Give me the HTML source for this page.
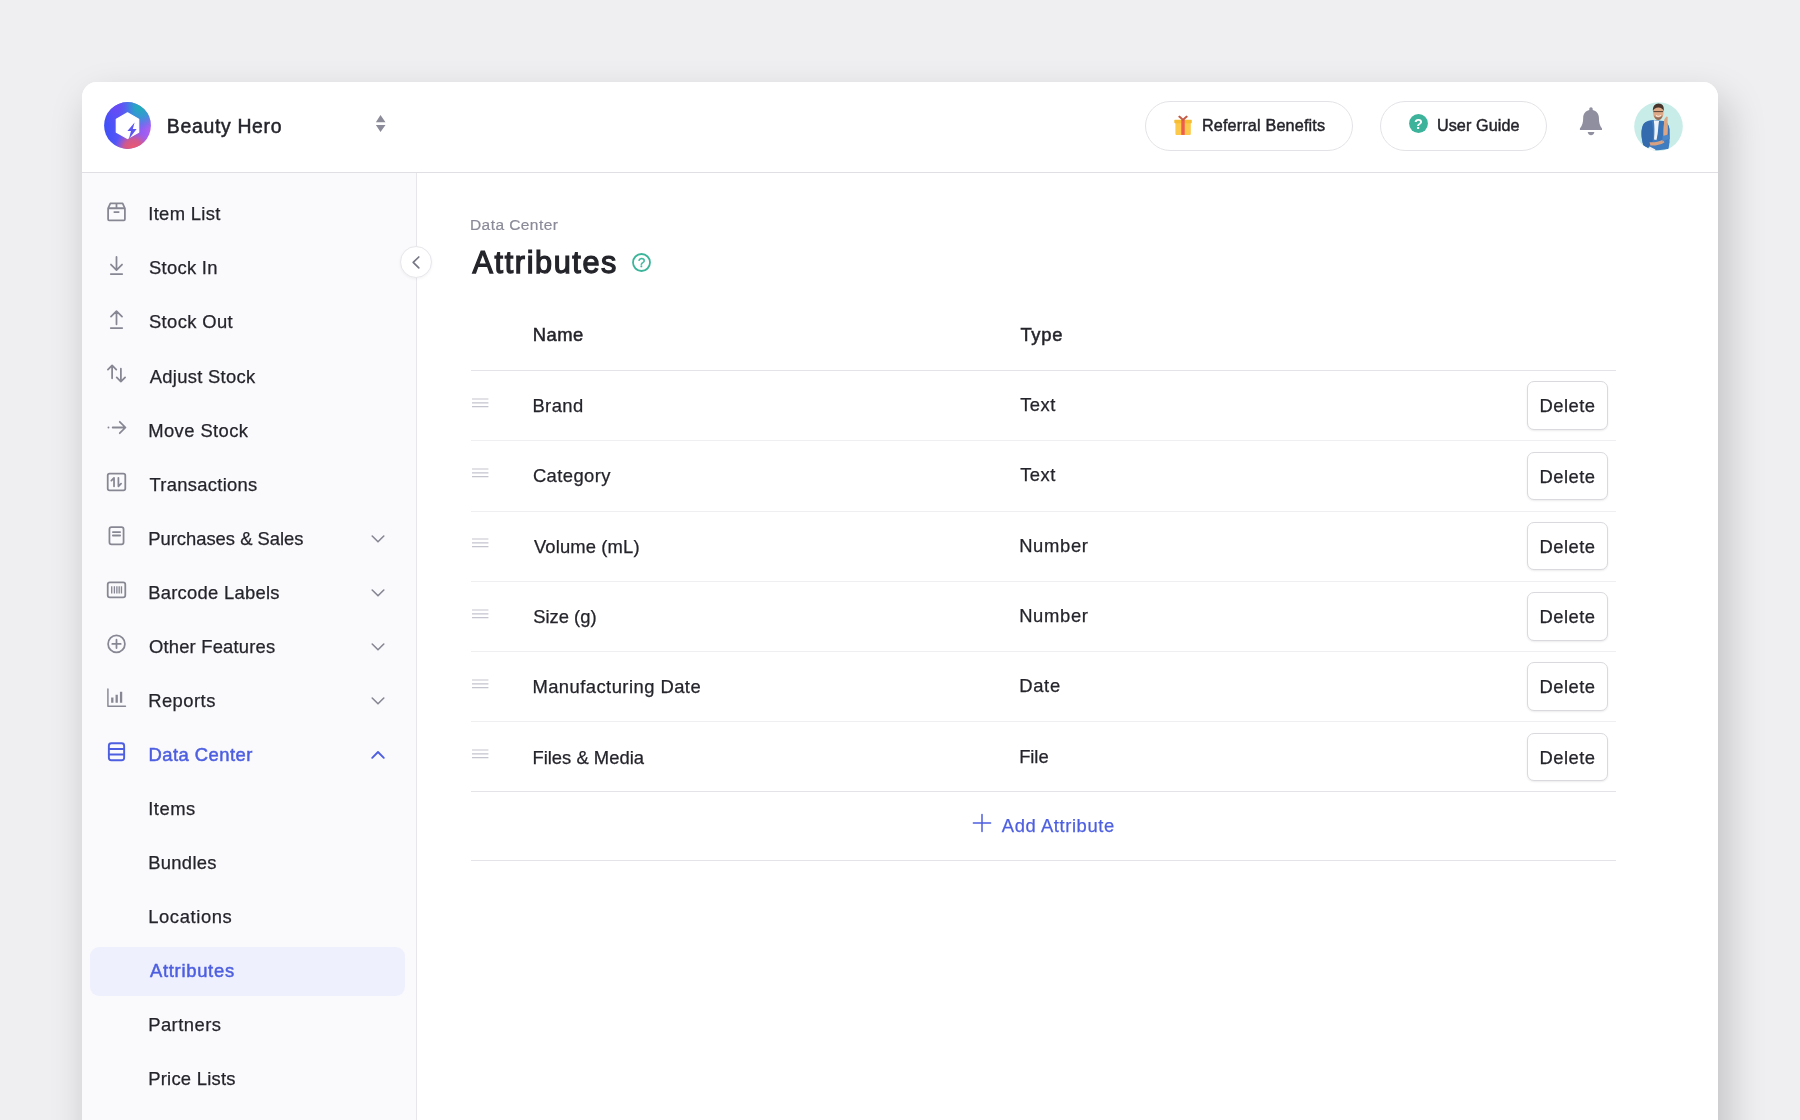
<!DOCTYPE html>
<html lang="en">
<head>
<meta charset="utf-8">
<title>Attributes - Data Center</title>
<style>
*{box-sizing:border-box;margin:0;padding:0}
html,body{width:1800px;height:1120px;overflow:hidden}
body{background:#efeff1;font-family:"Liberation Sans",Arial,sans-serif;color:#24242b;position:relative}
.card{position:absolute;left:82px;top:82px;width:1636px;height:1100px;background:#fff;border-radius:15px 15px 0 0;box-shadow:8px 18px 39px rgba(10,10,20,.21);overflow:hidden}
.hdrbg{position:absolute;left:0;top:0;width:1636px;height:91px;border-bottom:1.4px solid #e0e0e4;background:#fff}
.hdr{position:absolute;left:0;top:0;width:1636px;height:91px}
.layer{position:absolute;left:0;top:0;width:1636px;height:1100px;will-change:transform}
.sidebg{position:absolute;left:0;top:91px;width:335px;height:1010px;background:#fafafc;border-right:1.3px solid #e7e7eb}
.side{position:absolute;left:0;top:91px;width:335px;height:1010px}
.abs{position:absolute;white-space:nowrap}
.nav{position:absolute;left:67px;font-size:18.4px;line-height:24px;color:#24242b;white-space:nowrap;-webkit-text-stroke:.25px #24242b}

.active{position:absolute;left:8px;top:864px;width:315px;height:50px;background:#eff0fd;border-radius:9px}
.main{position:absolute;left:336px;top:91px;width:1300px;height:1010px}
.cell{position:absolute;font-size:18.4px;line-height:24px;white-space:nowrap;color:#24242b;-webkit-text-stroke:.25px #24242b}
.del{position:absolute;left:1109px;width:81px;height:48.6px;border:1px solid #d9d9de;border-radius:7px;background:#fff;box-shadow:0 1px 2px rgba(0,0,0,.08);font-size:18.4px;line-height:48.5px;text-align:center;color:#24242b;-webkit-text-stroke:.25px #24242b}
.blue{color:#4d5fe0;-webkit-text-stroke-color:#4d5fe0}
.pill{position:absolute;height:51px;border:1px solid #e3e3e7;border-radius:26px;background:#fff}
</style>
</head>
<body>
<div class="card">
  <div class="hdrbg"></div>
  <div class="sidebg"></div>
  <div class="layer">
  <div class="hdr">
<svg class="abs" style="left:21.7px;top:20.4px" width="47" height="47" viewBox="0 0 47 47">
  <defs>
    <linearGradient id="lg1" x1="0" y1="0.5" x2="1" y2="0.5"><stop offset="0" stop-color="#3d4ff8"/><stop offset="0.55" stop-color="#6a5cf5"/><stop offset="1" stop-color="#b25ff0"/></linearGradient>
    <radialGradient id="rg1" cx="0.78" cy="0.1" r="0.5"><stop offset="0" stop-color="#1fb0b6"/><stop offset="0.45" stop-color="#2a9fd0" stop-opacity=".85"/><stop offset="1" stop-color="#3d7cf0" stop-opacity="0"/></radialGradient>
    <radialGradient id="rg3" cx="0.25" cy="0.12" r="0.4"><stop offset="0" stop-color="#6b4af4"/><stop offset="1" stop-color="#5a4ff5" stop-opacity="0"/></radialGradient>
    <radialGradient id="rg2" cx="0.62" cy="1.0" r="0.4"><stop offset="0" stop-color="#f0586a"/><stop offset="0.5" stop-color="#e0587c" stop-opacity=".85"/><stop offset="1" stop-color="#c05ad0" stop-opacity="0"/></radialGradient>
  </defs>
  <circle cx="23.5" cy="23.5" r="23.4" fill="url(#lg1)"/>
  <circle cx="23.5" cy="23.5" r="23.4" fill="url(#rg1)"/>
  <circle cx="23.5" cy="23.5" r="23.4" fill="url(#rg2)"/>
  <circle cx="23.5" cy="23.5" r="23.4" fill="url(#rg3)"/>
  <path d="M23.5 10.8 L34.7 17.2 V30.2 L23.5 36.6 L12.3 30.2 V17.2 Z" fill="#fff" stroke="#fff" stroke-width="1.2" stroke-linejoin="round"/>
  <path d="M30.6 20.4 L23.4 29 H27 L24.8 37.2 L32.6 27 H28.8 Z" fill="#5b58f2"/>
</svg>
<div class="abs txt" id="brand" style="letter-spacing:0.69px;margin-left:-0.75px;left:85.6px;top:31.5px;font-size:19.4px;line-height:24px;font-weight:400;color:#24242b;-webkit-text-stroke:.5px #24242b">Beauty Hero</div>
<svg class="abs" style="left:293px;top:33px" width="12" height="18" viewBox="0 0 12 18"><path d="M5.5 .1 L10.5 7.2 H.9 Z M.9 9.9 H10.5 L5.5 17 Z" fill="#8b8b99"/></svg>

<div class="pill" style="left:1063px;top:19px;width:208px;height:50px"></div>
<svg class="abs" style="left:1091.1px;top:32.9px" width="20" height="21" viewBox="0 0 20 21">
  <rect x="2.4" y="7.4" width="15.4" height="12.5" rx=".8" fill="#fcc94a"/>
  <rect x="1.3" y="4.7" width="17.5" height="3.6" rx=".7" fill="#f6bd33"/>
  <rect x="8.3" y="4.4" width="3.4" height="15.5" fill="#ee5b4f"/>
  <path d="M10 6 L5 1.8 L6.6 .6 L10 3.6 L13.4 .6 L15 1.8 Z" fill="#c55a45"/>
</svg>
<div class="abs txt" id="ref" style="letter-spacing:0.167px;margin-left:-0.5px;left:1120.4px;top:31.2px;font-size:16.2px;line-height:24px;color:#24242b;-webkit-text-stroke:.45px #24242b">Referral Benefits</div>

<div class="pill" style="left:1298px;top:19px;width:167px;height:50px"></div>
<svg class="abs" style="left:1327px;top:32px" width="19" height="19" viewBox="0 0 19 19"><circle cx="9.5" cy="9.5" r="9.4" fill="#3cb39a"/><text x="9.5" y="14.7" text-anchor="middle" font-family="Liberation Sans, Arial, sans-serif" font-size="14.5" font-weight="700" fill="#fff">?</text></svg>
<div class="abs txt" id="ug" style="letter-spacing:0.081px;margin-left:-0.5px;left:1355.4px;top:31.2px;font-size:16.2px;line-height:24px;color:#24242b;-webkit-text-stroke:.45px #24242b">User Guide</div>

<svg class="abs" style="left:1497.05px;top:23.5px" width="24" height="30" viewBox="0 0 24 30">
  <path d="M12 1.3 C13 1.3 13.7 2 13.7 3 V3.9 C17.4 4.8 19.9 7.8 19.9 11.6 C19.9 16.5 20.6 20 23 22.6 V23.9 H.9 V22.6 C3.3 20 4.2 16.5 4.2 11.6 C4.2 7.8 6.6 4.8 10.3 3.9 V3 C10.3 2 11 1.3 12 1.3 Z" fill="#8f8fa0"/>
  <path d="M8.7 25.9 H15.4 C14.9 28 13.6 29.2 12 29.2 C10.4 29.2 9.2 28 8.7 25.9 Z" fill="#8f8fa0"/>
</svg>

<svg class="abs" style="left:1551.6px;top:19.7px" width="49" height="49" viewBox="0 0 49 49">
  <defs><clipPath id="avc"><circle cx="24.5" cy="24.5" r="24.3"/></clipPath></defs>
  <circle cx="24.5" cy="24.5" r="24.3" fill="#c8ece8"/>
  <g clip-path="url(#avc)">
    <path d="M9.5 43.5 C7 36 6.6 27 9.6 22 C12 18.8 16.5 18.2 20 18 L29.5 19 C33 20 35 23 35.4 27 L35.6 40 L34.5 47 L22 48.6 Z" fill="#3f7cc0"/>
    <path d="M9.5 43.5 C7 36 6.6 27 9.6 22 C11.4 19.6 14.5 18.8 17.5 18.4 C19 24 19.6 32 18.4 40 L14 46 Z" fill="#346aae"/>
    <path d="M19.8 18.2 L25 19 L24.6 30 L22.4 38 L20 37.6 C20.6 30 20.6 24 19.8 18.2 Z" fill="#eef1f5"/>
    <path d="M25 19.4 L29.5 19 C33 20 35 23 35.4 27 L35.6 37 L27 40 L23 38 Z" fill="#3a74b8"/>
    <path d="M15.5 40.2 C20 40.6 25 39.6 29.4 37.4 L30.4 40.4 C26 43 20.6 43.8 16.4 43.4 Z" fill="#d7a080"/>
    <path d="M15.6 44.6 L21.4 47.6 L21 49 L14 48 Z" fill="#f0f2f6"/>
    <path d="M29.4 35.6 C29.2 30 29.4 24.6 30 21.4 C29.6 18.6 30.4 16.4 32.6 14.6 L33.8 15 C33.4 16.6 33.8 18 33.6 20 C34 24.6 34 30 33.4 34.6 Z" fill="#dca584"/>
    <path d="M28.6 34 L34.4 32.6 L35.2 37 L28.4 39.6 Z" fill="#4a86c8"/>
    <ellipse cx="24.3" cy="11" rx="5.2" ry="6.9" fill="#dda987"/>
    <path d="M19 9.4 C18.4 4.6 21 1.6 24.6 1.6 C28.4 1.6 30.6 4.6 29.6 9.2 C28.8 6.8 27 5.6 24.4 5.6 C21.8 5.6 19.8 6.8 19 9.4 Z" fill="#47352c"/>
    <path d="M20 13.2 C20.6 16.6 22.4 18 24.3 18 C26.2 18 28 16.6 28.6 13.2 C27.4 15 25.8 15.4 24.3 15.4 C22.8 15.4 21.2 15 20 13.2 Z" fill="#7a5a48" opacity=".75"/>
    <path d="M19.4 9.6 H29.2" stroke="#2f2622" stroke-width=".8"/>
    <path d="M22 13.6 C23.4 14.6 25.4 14.6 26.8 13.4" stroke="#fff" stroke-width=".9" fill="none"/>
  </g>
</svg>
</div>
  <div class="side"><div class="active" style="left:7.6px;top:773.5px;width:315.4px;height:49.5px"></div>
<div class="nav" id="n0" style="letter-spacing:0.333px;margin-left:-0.5px;left:66.7px;top:29.4px">Item List</div>
<div class="abs" style="left:23.6px;top:28.0px;width:21px;height:21px"><svg width="21" height="21" viewBox="0 0 22 22" fill="none" stroke="#878794" stroke-width="1.85" stroke-linecap="round" stroke-linejoin="round"><path d="M2.2 7.6 L4.6 2.4 H17.4 L19.8 7.6 V19.2 C19.8 19.8 19.4 20.2 18.8 20.2 H3.2 C2.6 20.2 2.2 19.8 2.2 19.2 Z" /><path d="M2.2 7.6 H19.8 M11 2.4 V7.6 M8 11.6 H14" stroke-linecap="butt"/></svg></div>
<div class="nav" id="n1" style="letter-spacing:0.302px;margin-left:0.25px;left:66.7px;top:83.44px">Stock In</div>
<div class="abs" style="left:23.6px;top:82.04px;width:21px;height:21px"><svg width="21" height="21" viewBox="0 0 22 22" fill="none" stroke="#878794" stroke-width="1.85" stroke-linecap="round" stroke-linejoin="round"><path d="M11 2 V15.6 M5.2 10 L11 15.8 L16.8 10 M5 20 H17"/></svg></div>
<div class="nav" id="n2" style="letter-spacing:0.371px;margin-left:0.25px;left:66.7px;top:137.48px">Stock Out</div>
<div class="abs" style="left:23.6px;top:136.08px;width:21px;height:21px"><svg width="21" height="21" viewBox="0 0 22 22" fill="none" stroke="#878794" stroke-width="1.85" stroke-linecap="round" stroke-linejoin="round"><path d="M11 16 V2.4 M5.2 8 L11 2.2 L16.8 8 M5 20 H17"/></svg></div>
<div class="nav" id="n3" style="letter-spacing:0.304px;margin-left:1.0px;left:66.7px;top:191.52px">Adjust Stock</div>
<div class="abs" style="left:23.6px;top:190.12px;width:21px;height:21px"><svg width="21" height="21" viewBox="0 0 22 22" fill="none" stroke="#878794" stroke-width="1.85" stroke-linecap="round" stroke-linejoin="round"><path d="M6.4 16 V2.6 M2 7 L6.4 2.6 L10.8 7 M15.6 6 V19.4 M11.2 15 L15.6 19.4 L20 15"/></svg></div>
<div class="nav" id="n4" style="letter-spacing:0.422px;margin-left:-0.5px;left:66.7px;top:245.56px">Move Stock</div>
<div class="abs" style="left:23.6px;top:244.16px;width:21px;height:21px"><svg width="21" height="21" viewBox="0 0 22 22" fill="none" stroke="#878794" stroke-width="1.85" stroke-linecap="round" stroke-linejoin="round"><path d="M7 11 H20 M14.4 5 L20.4 11 L14.4 17"/><circle cx="2.6" cy="11" r="1" fill="#878794" stroke="none"/></svg></div>
<div class="nav" id="n5" style="letter-spacing:0.295px;margin-left:0.75px;left:66.7px;top:299.6px">Transactions</div>
<div class="abs" style="left:23.6px;top:298.2px;width:21px;height:21px"><svg width="21" height="21" viewBox="0 0 22 22" fill="none" stroke="#878794" stroke-width="1.85" stroke-linecap="round" stroke-linejoin="round"><rect x="1.8" y="2.8" width="18.4" height="17.6" rx="2"/><path d="M8.4 16 V7.2 L5.6 10 M13 7.2 V16 L15.8 13.2"/></svg></div>
<div class="nav" id="n6" style="letter-spacing:-0.005px;margin-left:-0.5px;left:66.7px;top:353.64px">Purchases &amp; Sales</div>
<div class="abs" style="left:23.6px;top:352.24px;width:21px;height:21px"><svg width="21" height="21" viewBox="0 0 22 22" fill="none" stroke="#878794" stroke-width="1.85" stroke-linecap="round" stroke-linejoin="round"><rect x="3.6" y="2.2" width="14.8" height="18" rx="2.2"/><path d="M7.2 7.4 H14.8 M7.2 11 H14.8"/></svg></div>
<svg class="abs" style="left:288px;top:360.64px" width="16" height="10" viewBox="0 0 16 10" fill="none" stroke="#878794" stroke-width="1.6" stroke-linecap="round" stroke-linejoin="round"><path d="M2.2 2 L8 7.8 L13.8 2"/></svg>
<div class="nav" id="n7" style="letter-spacing:0.27px;margin-left:-0.5px;left:66.7px;top:407.68px">Barcode Labels</div>
<div class="abs" style="left:23.6px;top:406.28px;width:21px;height:21px"><svg width="21" height="21" viewBox="0 0 22 22" fill="none" stroke="#878794" stroke-width="1.85" stroke-linecap="round" stroke-linejoin="round"><rect x="1.8" y="3.6" width="18.4" height="15.6" rx="2.2"/><path d="M6 7.6 V15.2 M8.8 7.6 V15.2 M11.4 7.6 V15.2 M13.8 7.6 V15.2 M16.2 7.6 V15.2" stroke-width="1.4" stroke-linecap="butt"/></svg></div>
<svg class="abs" style="left:288px;top:414.68px" width="16" height="10" viewBox="0 0 16 10" fill="none" stroke="#878794" stroke-width="1.6" stroke-linecap="round" stroke-linejoin="round"><path d="M2.2 2 L8 7.8 L13.8 2"/></svg>
<div class="nav" id="n8" style="letter-spacing:0.199px;margin-left:0.25px;left:66.7px;top:461.72px">Other Features</div>
<div class="abs" style="left:23.6px;top:460.32px;width:21px;height:21px"><svg width="21" height="21" viewBox="0 0 22 22" fill="none" stroke="#878794" stroke-width="1.85" stroke-linecap="round" stroke-linejoin="round"><circle cx="11" cy="11.4" r="8.8"/><path d="M11 7 V15.8 M6.6 11.4 H15.4"/></svg></div>
<svg class="abs" style="left:288px;top:468.72px" width="16" height="10" viewBox="0 0 16 10" fill="none" stroke="#878794" stroke-width="1.6" stroke-linecap="round" stroke-linejoin="round"><path d="M2.2 2 L8 7.8 L13.8 2"/></svg>
<div class="nav" id="n9" style="letter-spacing:0.457px;margin-left:-0.5px;left:66.7px;top:515.76px">Reports</div>
<div class="abs" style="left:23.6px;top:514.36px;width:21px;height:21px"><svg width="21" height="21" viewBox="0 0 22 22" fill="none" stroke="#878794" stroke-width="1.85" stroke-linecap="round" stroke-linejoin="round"><path d="M2 2 V20.2 H20.4" stroke-width="1.5"/><path d="M6.6 16.6 V11 M11.2 16.6 V8 M15.8 16.6 V5" stroke-width="2.4" stroke-linecap="butt"/></svg></div>
<svg class="abs" style="left:288px;top:522.76px" width="16" height="10" viewBox="0 0 16 10" fill="none" stroke="#878794" stroke-width="1.6" stroke-linecap="round" stroke-linejoin="round"><path d="M2.2 2 L8 7.8 L13.8 2"/></svg>
<div class="nav blue" id="n10" style="letter-spacing:0.48px;margin-left:-0.25px;left:66.7px;top:569.8px;-webkit-text-stroke:.5px #4d5fe0">Data Center</div>
<div class="abs" style="left:23.6px;top:568.4px;width:21px;height:21px"><svg width="21" height="21" viewBox="0 0 22 22" fill="none" stroke="#4d5fe0" stroke-width="2.0" stroke-linecap="round" stroke-linejoin="round"><rect x="3" y="2.4" width="16" height="17.8" rx="2.6"/><path d="M3 8.4 H19 M3 14.2 H19"/></svg></div>
<svg class="abs" style="left:288px;top:576.8px" width="16" height="10" viewBox="0 0 16 10" fill="none" stroke="#4d5fe0" stroke-width="1.9" stroke-linecap="round" stroke-linejoin="round"><path d="M2.2 7.8 L8 2 L13.8 7.8"/></svg>
<div class="nav" id="n11" style="letter-spacing:0.505px;margin-left:-0.5px;left:66.7px;top:623.84px">Items</div>
<div class="nav" id="n12" style="letter-spacing:0.319px;margin-left:-0.5px;left:66.7px;top:677.88px">Bundles</div>
<div class="nav" id="n13" style="letter-spacing:0.61px;margin-left:-0.5px;left:66.7px;top:731.92px">Locations</div>
<div class="nav blue" id="n14" style="letter-spacing:0.718px;margin-left:1.25px;left:66.7px;top:785.96px;-webkit-text-stroke:.5px #4d5fe0">Attributes</div>
<div class="nav" id="n15" style="letter-spacing:0.461px;margin-left:-0.5px;left:66.7px;top:840.0px">Partners</div>
<div class="nav" id="n16" style="letter-spacing:0.246px;margin-left:-0.5px;left:66.7px;top:894.04px">Price Lists</div>
</div>
  <div class="main">
<div class="abs" style="left:-17.6px;top:73.4px;width:32px;height:32px;border-radius:50%;background:#fff;border:1px solid #e6e6eb;box-shadow:0 1px 3px rgba(0,0,0,.05)"></div>
<svg class="abs" style="left:-10px;top:81px" width="16" height="16" viewBox="0 0 16 16" fill="none" stroke="#767684" stroke-width="1.7" stroke-linecap="round" stroke-linejoin="round"><path d="M10.8 3 L5.2 8.4 L10.8 13.8"/></svg>
<div class="abs txt" id="crumb" style="letter-spacing:0.428px;margin-left:-1.0px;left:53px;top:40px;font-size:15.5px;line-height:24px;color:#8a8a98;-webkit-text-stroke:.2px #8a8a98">Data Center</div>
<div class="abs txt" id="title" style="letter-spacing:1.61px;margin-left:0.0px;left:54.6px;top:69.4px;font-size:30.6px;line-height:40px;font-weight:400;color:#24242b;-webkit-text-stroke:1.25px #24242b">Attributes</div>
<svg class="abs" style="left:213px;top:79.4px" width="21" height="21" viewBox="0 0 21 21"><circle cx="10.5" cy="10.5" r="8.5" fill="none" stroke="#3bb59a" stroke-width="1.8"/><text x="10.5" y="15.1" text-anchor="middle" font-family="Liberation Sans, Arial, sans-serif" font-size="13" font-weight="400" stroke="#3bb59a" stroke-width=".4" fill="#3bb59a">?</text></svg>
<div class="cell" id="hname" style="letter-spacing:0.545px;margin-left:-0.25px;left:114.9px;top:149.9px;-webkit-text-stroke:.5px #24242b">Name</div>
<div class="cell" id="htype" style="letter-spacing:0.723px;margin-left:0.5px;left:601.9px;top:149.9px;-webkit-text-stroke:.5px #24242b">Type</div>
<div class="abs" style="left:53px;top:197px;width:1144.5px;height:1.1px;background:#e3e3e8"></div>
<svg class="abs" style="left:54px;top:224.8px" width="17" height="10" viewBox="0 0 17 10"><path d="M0 1 H16.4 M0 4.8 H16.4 M0 8.6 H16.4" stroke="#c4c4ce" stroke-width="1.15" fill="none"/></svg>
<div class="cell" id="rn0" style="letter-spacing:0.426px;margin-left:-0.5px;left:114.9px;top:221.0px">Brand</div>
<div class="cell" id="rt0" style="letter-spacing:0.495px;margin-left:0.25px;left:601.9px;top:220.0px">Text</div>
<div class="del" style="left:1109.3px;top:208.2px"><span id="del0" style="letter-spacing:0.462px;margin-left:-0.5px;">Delete</span></div>
<div class="abs" style="left:53px;top:267.25px;width:1144.5px;height:1px;background:#efeff2"></div>
<svg class="abs" style="left:54px;top:295.1px" width="17" height="10" viewBox="0 0 17 10"><path d="M0 1 H16.4 M0 4.8 H16.4 M0 8.6 H16.4" stroke="#c4c4ce" stroke-width="1.15" fill="none"/></svg>
<div class="cell" id="rn1" style="letter-spacing:0.422px;margin-left:0.0px;left:114.9px;top:291.3px">Category</div>
<div class="cell" id="rt1" style="letter-spacing:0.495px;margin-left:0.25px;left:601.9px;top:290.3px">Text</div>
<div class="del" style="left:1109.3px;top:278.5px"><span id="del1" style="letter-spacing:0.462px;margin-left:-0.5px;">Delete</span></div>
<div class="abs" style="left:53px;top:337.55px;width:1144.5px;height:1px;background:#efeff2"></div>
<svg class="abs" style="left:54px;top:365.4px" width="17" height="10" viewBox="0 0 17 10"><path d="M0 1 H16.4 M0 4.8 H16.4 M0 8.6 H16.4" stroke="#c4c4ce" stroke-width="1.15" fill="none"/></svg>
<div class="cell" id="rn2" style="letter-spacing:0.143px;margin-left:1.0px;left:114.9px;top:361.6px">Volume (mL)</div>
<div class="cell" id="rt2" style="letter-spacing:0.686px;margin-left:-0.75px;left:601.9px;top:360.6px">Number</div>
<div class="del" style="left:1109.3px;top:348.8px"><span id="del2" style="letter-spacing:0.462px;margin-left:-0.5px;">Delete</span></div>
<div class="abs" style="left:53px;top:407.85px;width:1144.5px;height:1px;background:#efeff2"></div>
<svg class="abs" style="left:54px;top:435.7px" width="17" height="10" viewBox="0 0 17 10"><path d="M0 1 H16.4 M0 4.8 H16.4 M0 8.6 H16.4" stroke="#c4c4ce" stroke-width="1.15" fill="none"/></svg>
<div class="cell" id="rn3" style="letter-spacing:0.008px;margin-left:0.25px;left:114.9px;top:431.9px">Size (g)</div>
<div class="cell" id="rt3" style="letter-spacing:0.686px;margin-left:-0.75px;left:601.9px;top:430.9px">Number</div>
<div class="del" style="left:1109.3px;top:419.1px"><span id="del3" style="letter-spacing:0.462px;margin-left:-0.5px;">Delete</span></div>
<div class="abs" style="left:53px;top:478.15px;width:1144.5px;height:1px;background:#efeff2"></div>
<svg class="abs" style="left:54px;top:506.0px" width="17" height="10" viewBox="0 0 17 10"><path d="M0 1 H16.4 M0 4.8 H16.4 M0 8.6 H16.4" stroke="#c4c4ce" stroke-width="1.15" fill="none"/></svg>
<div class="cell" id="rn4" style="letter-spacing:0.456px;margin-left:-0.5px;left:114.9px;top:502.2px">Manufacturing Date</div>
<div class="cell" id="rt4" style="letter-spacing:0.707px;margin-left:-0.75px;left:601.9px;top:501.2px">Date</div>
<div class="del" style="left:1109.3px;top:489.4px"><span id="del4" style="letter-spacing:0.462px;margin-left:-0.5px;">Delete</span></div>
<div class="abs" style="left:53px;top:548.45px;width:1144.5px;height:1px;background:#efeff2"></div>
<svg class="abs" style="left:54px;top:576.3px" width="17" height="10" viewBox="0 0 17 10"><path d="M0 1 H16.4 M0 4.8 H16.4 M0 8.6 H16.4" stroke="#c4c4ce" stroke-width="1.15" fill="none"/></svg>
<div class="cell" id="rn5" style="letter-spacing:0.021px;margin-left:-0.5px;left:114.9px;top:572.5px">Files &amp; Media</div>
<div class="cell" id="rt5" style="letter-spacing:-0.055px;margin-left:-0.75px;left:601.9px;top:571.5px">File</div>
<div class="del" style="left:1109.3px;top:559.7px"><span id="del5" style="letter-spacing:0.462px;margin-left:-0.5px;">Delete</span></div>
<div class="abs" style="left:53px;top:617.9px;width:1144.5px;height:1.1px;background:#e3e3e8"></div>
<svg class="abs" style="left:554.4px;top:639.5px" width="20" height="20" viewBox="0 0 20 20" fill="none" stroke="#4d5fe0" stroke-width="1.5" stroke-linecap="round"><path d="M10 1.4 V18.6 M1.4 10 H18.6"/></svg>
<div class="cell blue" id="add" style="letter-spacing:0.581px;margin-left:0.25px;left:583.6px;top:641.1px">Add Attribute</div>
<div class="abs" style="left:53px;top:687.2px;width:1144.5px;height:1.1px;background:#e3e3e8"></div>
</div>
  </div>
</div>
</body>
</html>
